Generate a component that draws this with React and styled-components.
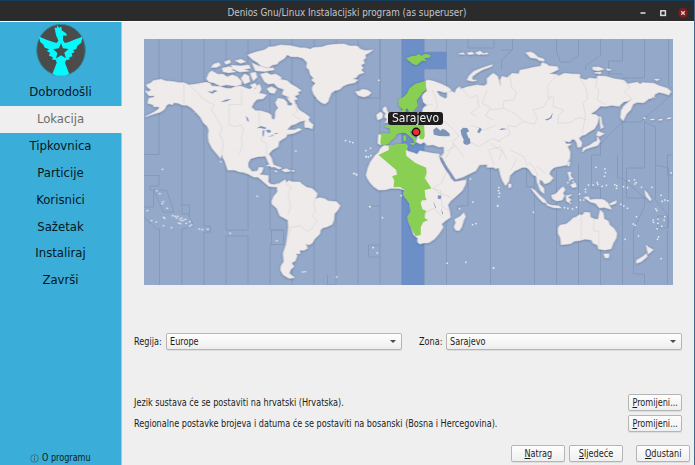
import React from "react";
import styled, { createGlobalStyle } from "styled-components";

const Global = createGlobalStyle`
  * { box-sizing: border-box; }
  body { margin: 0; background: #efefef; font-family: "DejaVu Sans Condensed", "DejaVu Sans", sans-serif; font-stretch: condensed; color: #1c1c1c; }
`;

const Window = styled.div`
  width: 695px; height: 465px; display: flex; flex-direction: column; overflow: hidden;
  background: #efefef; border-right: 1px solid #46688e;
`;
const TitleBar = styled.header`
  flex: 0 0 21px; display: grid; grid-template-columns: 1fr auto 1fr; align-items: center;
  background: #2b2b2b; border-top: 1px solid #123c5c; color: #c3c6cd; font-size: 10px; line-height: 14px;
  padding-top: 3px;
`;
const Title = styled.span`
  grid-column: 2; white-space: nowrap; transform: scaleX(0.98);
`;
const WindowButtons = styled.div`
  justify-self: end; display: flex; align-items: center; gap: 10px; padding-right: 6px;
  svg { display: block; }
`;
const Body = styled.div`
  flex: 1; display: flex; min-height: 0; border-top: 1px solid #fbfbfb;
`;
const Sidebar = styled.aside`
  flex: 0 0 122px; display: flex; flex-direction: column; align-items: center;
  background: #3aaed8; border-right: 1px solid #8fd0e6;
`;
const Logo = styled.svg`
  display: block; width: 52px; height: 54px; margin-top: 1px; flex: none;
`;
const Steps = styled.nav`
  width: 100%; display: flex; flex-direction: column; padding-top: 2px;
`;
const Step = styled.div`
  height: 26.85px; display: flex; align-items: center; justify-content: center;
  margin-right: ${p => (p.$current ? "-1px" : "0")};
  padding-right: ${p => (p.$current ? "1px" : "0")};
  font-size: 13px; line-height: 16px;
  background: ${p => (p.$current ? "#efefef" : "transparent")};
  color: ${p => (p.$current ? "#6d6d6d" : "#06161c")};
`;
const About = styled.div`
  margin-top: auto; height: 14px; display: flex; align-items: center; gap: 3px;
  font-size: 10px; line-height: 14px; color: #0b1b22;
  svg { display: block; }
  span { display: block; width: 49px; white-space: nowrap; transform: scaleX(0.9); transform-origin: left; }
`;
const Content = styled.main`
  flex: 1; display: flex; flex-direction: column; padding: 17px 12px 0 12px; min-width: 0;
`;
const MapBox = styled.div`
  width: 529px; height: 246px; margin-left: 9.5px; flex: none;
  display: grid; position: relative;
`;
const MapSvg = styled.svg`
  display: block; width: 529px; height: 246px;
`;
const MapLabel = styled.div`
  position: absolute; left: 244.5px; top: 73px; width: 55px; height: 13px;
  display: flex; justify-content: center; align-items: center;
  background: #1d1d1d; border-radius: 3px; color: #f2f2f2; font-size: 12px; line-height: 12px; padding-bottom: 2px;
`;
const Selectors = styled.div`
  margin-top: 48px; display: flex; align-items: center; flex: none;
`;
const Text = styled.span`
  font-size: 10px; line-height: 16px; white-space: nowrap; transform: scaleX(0.903); transform-origin: left;
`;
const FieldLabel = styled(Text)`
  width: ${p => p.$w}px; margin-left: ${p => p.$gap || 0}px;
`;
const Select = styled.div`
  width: 236px; height: 17px; display: flex; align-items: center; justify-content: space-between;
  padding: 0 5px 0 2.5px; border: 1px solid #b5b5b5; border-radius: 2px;
  background: linear-gradient(#fefefe, #eeeeee); box-shadow: 0 1px 0 #dedede;
`;
const Arrow = styled.i`
  border: 3px solid transparent; border-top: 3px solid #4b4b4b; border-bottom: 0;
`;
const Settings = styled.div`
  margin-top: 44px; display: flex; flex-direction: column; gap: 4px; flex: none;
`;
const SettingRow = styled.div`
  display: flex; align-items: center; justify-content: space-between; height: 17px;
  > ${Text} { padding-top: 1px; }
`;
const Button = styled.button`
  width: ${p => p.$w || 54}px; height: 17px; padding: 0; display: flex; align-items: center; justify-content: center;
  border: 1px solid #b5b5b5; border-radius: 2px; background: linear-gradient(#fefefe, #efefef);
  box-shadow: 0 1px 0 #dedede; color: inherit; font: inherit;
  ${Text} { transform-origin: center; padding-top: 1px; }
  u { text-underline-offset: 1px; text-decoration-thickness: 1px; }
`;
const Footer = styled.footer`
  display: flex; justify-content: flex-end; gap: 4px; margin: 12.5px -8px 0 0;
  ${Button}:last-child { margin-left: 9px; }
`;

const steps = ["Dobrodošli", "Lokacija", "Tipkovnica", "Particije", "Korisnici", "Sažetak", "Instaliraj", "Završi"];

/* Map sections, each drawn on its own grid of three units to a pixel. */
const sections = {
  northAmerica: "translate(140 30) scale(.33333)",
  southAmerica: "translate(140 155) scale(.33333)",
  europe: "translate(310 30) scale(.33333)",
  africa: "translate(350 140) scale(.33333)",
  asia: "translate(490 30) scale(.33333)",
  oceania: "translate(490 150) scale(.33333)",
};

const land = {
  northAmerica: [
    "M15 183L24 185 32 180 20 170 18 164 30 160 38 152 62 148 75 153 100 155 115 158 130 158 145 165 165 163 180 160 198 157 210 161 212 168 240 170 255 175 270 176 285 170 300 168 315 174 328 178 338 172 345 178 352 165 358 164 362 178 356 190 368 192 378 195 368 206 350 208 340 218 333 232 345 242 362 243 385 250 392 255 394 266 400 270 404 262 405 245 412 235 405 218 412 205 430 208 438 215 441 226 450 228 458 221 467 224 472 235 480 243 492 250 508 262 503 269 490 272 480 274 465 282 452 286 445 293 440 300 462 300 475 295 483 299 462 309 448 312 440 313 436 322 425 328 415 335 413 350 395 360 385 372 393 385 400 410 393 412 384 398 375 378 350 380 330 386 322 400 322 420 262 420 245 370 240 385 215 355 205 335 203 318 205 300 200 288 190 280 180 262 160 240 150 232 140 226 125 225 112 219 100 218 96 224 85 221 78 226 72 238 60 246 40 252 15 260 40 247 55 237 56 230 40 230 38 224 22 220 25 205 42 202 40 197 25 197Z",
    "M322 75L335 70 350 65 372 60 385 51 400 50 420 45 450 47 485 55 475 60 460 68 440 74 432 85 415 95 410 102 395 105 385 113 362 108 350 97 335 88Z",
    "M360 133L378 128 392 135 405 132 422 142 418 148 440 152 452 163 468 172 482 182 472 186 475 193 462 198 471 208 458 210 443 200 425 193 430 178 412 172 400 160 383 162 372 155Z",
    "M198 146L206 128 214 123 232 133 248 133 260 141 275 135 290 140 302 153 303 163 286 168 258 164 240 168 220 158 205 155Z",
    "M212 112L220 102 235 98 240 106 228 112ZM245 115L265 110 282 114 272 120 285 125 265 128 248 125ZM252 95L268 90 270 98 256 103ZM285 92L302 88 315 95 300 100ZM272 106L300 108 325 105 330 115 310 118 325 123 298 126 280 118ZM335 100L355 108 380 115 399 114 400 120 372 124 345 122ZM302 145L312 132 325 138 328 155 312 162ZM330 130L345 127 350 142 338 152 333 140ZM330 165L345 160 350 172 338 175ZM380 176L392 170 408 178 402 190 388 188ZM492 278L500 263 507 275 518 284 515 296 505 293 493 292ZM440 203L460 206 466 228 448 215Z",
  ],
  southAmerica: [
    "M240 -12L252 -8 260 8 272 30 278 42 295 50 310 52 325 58 340 66 352 66 362 74 376 86 385 94 395 95 410 96 413 85 403 89 390 88 383 80 384 62 368 60 356 59 364 52 368 38 356 37 351 48 335 50 323 36 321 15 328 0 345 -12ZM245 -8L253 1 268 25 262 28 252 14 247 8Z",
    "M378 32L392 27 408 33 423 39 415 42 398 34ZM424 45L438 41 450 48 434 51ZM454 46L462 47 457 50ZM403 47L411 49 405 51Z",
    "M410 92L418 84 434 74 438 83 444 77 458 81 478 81 485 88 498 97 516 101 530 115 528 125 522 132 538 128 552 131 563 138 588 140 599 152 593 164 582 176 580 195 575 208 560 215 548 218 540 225 538 237 522 252 515 265 504 270 495 265 501 280 491 286 478 285 478 296 465 296 470 302 464 318 453 323 460 335 450 344 446 355 462 368 445 370 428 359 420 345 422 332 430 320 428 295 437 268 440 248 444 215 442 195 418 182 409 160 394 147 394 137 400 124 411 111Z",
  ],
  europe: [
    "M-80 68L-55 62 -42 58 -20 53 0 58 8 53 35 51 50 46 75 43 100 42 118 48 140 48 150 58 165 62 187 60 176 68 164 74 166 84 158 90 162 100 151 105 158 114 152 120 160 128 145 133 138 142 126 147 142 150 132 158 112 162 98 168 88 178 72 182 62 190 56 205 52 216 42 222 30 216 20 207 10 193 5 180 6 170 15 160 3 150 10 145 0 135 -4 120 -12 112 -10 98 -22 85 -38 80 -58 80Z",
    "M135 185L148 183 155 178 172 181 182 188 175 196 160 201 143 196Z",
    "M341 156L352 150 370 154 392 162 415 173 422 180 415 187 400 187 385 182 378 184 388 198 405 207 410 200 410 188 425 184 432 190 438 177 447 170 450 178 470 171 500 165 520 168 530 162 545 150 537 138 549 130 562 140 566 155 570 170 580 400 420 410 407 405 400 350 385 351 368 344 350 346 341 336 330 342 316 335 322 320 312 308 305 300 300 290 320 270 320 256 335 248 338 234 350 226 371 222 350 225 338 216 335 200 338 193 350 183Z",
    "M218 234L226 230 230 243 236 252 245 268 240 275 224 278 230 268 222 260 226 250 218 244ZM198 255L210 246 217 252 215 264 202 270ZM204 314L216 314 211 345 202 340ZM470 150L476 137 490 124 515 114 545 104 544 109 516 119 498 130 485 140 485 149 498 151 486 154Z",
    "M445 72L458 68 462 73ZM470 69L485 66 490 72 475 74ZM495 69L508 63 518 70 505 74ZM515 73L530 68 532 72Z",
  ],
  africa: [
    "M75 45L84 38 90 25 100 17 118 18 165 12 170 18 166 28 172 34 188 38 200 43 208 32 225 36 245 40 265 42 272 52 268 58 277 75 285 90 295 103 300 115 312 126 330 123 347 120 345 133 335 152 315 170 300 183 292 195 296 208 300 232 285 242 273 252 278 262 265 282 252 297 235 308 218 309 208 312 201 306 202 295 190 285 183 263 175 245 173 230 182 215 178 190 160 165 163 150 145 145 120 145 105 149 85 150 70 140 60 130 50 114 47 105 52 85 60 66Z",
    "M340 218L345 230 340 240 333 262 326 272 315 270 311 260 316 248 313 238 328 230Z",
    "M245 -14L560 -20 570 100 560 100 549 106 540 94 532 80 522 76 510 85 492 93 478 107 475 124 465 137 455 120 450 105 445 83 434 86 426 73 415 68 390 66 370 64 360 62 350 50 336 42 350 61 358 66 365 58 378 64 386 76 376 92 360 100 335 112 315 118 308 106 293 84 278 57 273 48 281 38 284 17 272 12 258 13 243 7 238 0ZM474 132L481 132 482 141 475 144Z",
  ],
  asia: [
    "M-10 145L5 134 16 137 22 150 25 163 20 175 28 176 31 163 29 150 35 139 50 143 65 130 85 132 88 121 112 116 130 112 150 109 155 98 168 102 175 108 200 110 204 118 190 125 175 131 200 134 205 138 222 130 240 132 268 133 268 145 286 150 297 144 318 147 322 138 345 139 370 146 400 151 412 162 440 157 450 163 455 158 490 160 505 167 530 175 541 184 535 195 520 190 505 187 493 193 490 203 475 206 460 218 440 217 428 222 420 240 408 252 398 272 390 263 392 242 400 228 425 207 412 213 400 215 385 229 365 226 345 229 330 228 318 240 300 252 318 255 325 262 321 280 312 296 295 306 284 314 275 316 265 325 274 338 272 350 262 352 259 338 252 328 245 328 237 336 222 332 227 342 242 342 231 350 239 366 238 385 228 405 190 412 -10 412Z",
    "M106 68L120 66 130 70 143 82 160 87 160 94 145 91 138 85 120 83ZM306 112L325 111 340 118 322 122 308 119ZM348 116L362 119 352 122ZM312 128L332 126 330 132ZM492 148L506 148 500 152Z",
    "M328 258L332 262 334 280 339 292 331 296 329 280ZM322 304L341 311 328 319 318 316ZM321 320L329 334 322 346 302 352 286 357 276 366 278 355 298 346 310 337 320 333Z",
    "M458 263L465 266M480 269L491 268M505 270L515 268M530 266L541 264",
  ],
  oceania: [
    "M190 53L180 62 176 72 188 84 178 96 163 102 155 92 147 88 147 102 160 115 161 131 150 122 140 97 138 80 127 72 118 60 100 46 80 20 230 15 222 32Z",
    "M122 115L132 120 148 137 163 149 169 160 157 157 144 143 131 128ZM168 160L182 166 205 168 212 174 190 173 170 166ZM183 136L196 132 208 118 218 110 224 119 217 130 222 137 215 150 198 153 186 146ZM227 137L244 134 232 142 242 150 236 153 241 161 228 153ZM280 142L294 140 298 150 312 148 335 148 350 155 363 178 340 172 327 174 315 160 300 156ZM232 67L241 66 240 78 248 87 238 88ZM240 105L255 98 258 110 247 113ZM231 40L238 35 236 48 231 47Z",
    "M203 234L208 226 228 222 240 212 248 204 258 201 266 194 276 196 282 187 298 188 300 202 313 208 323 208 329 180 338 188 341 207 353 213 358 226 370 235 379 250 377 265 368 280 362 296 343 300 325 297 320 284 308 280 303 270 285 267 265 272 252 273 240 281 212 284 210 265 203 250Z",
    "M340 312L356 312 354 324 344 323ZM467 285L473 291 478 294 488 299 479 308 473 312 470 300ZM468 311L470 320 452 335 438 340 438 331 455 321Z",
    "M463 122L470 128 482 148 479 153 466 138ZM357 162L370 155 378 152 376 160 362 165Z",
  ],
};

const green = {
  europe: "M264 210L280 201 290 191 298 175 315 162 338 155 345 153 346 178 335 188 326 201 318 211 322 228 312 240 308 252 299 253 292 235 278 238 266 229ZM275 240L285 236 285 250 338 250 340 284 342 318 338 328 328 327 326 312 308 305 298 301 300 312 318 328 313 342 309 328 295 316 284 308 268 308 258 313 255 320 241 332 233 342 218 344 210 339 213 315 205 311 218 309 240 311 238 295 224 291 222 286 240 286 255 270ZM288 85L304 79 318 77 325 72 332 78 345 72 360 76 358 82 340 85 348 94 335 91 328 97 318 105 306 101 300 95 295 92ZM279 318L286 316 286 332 280 334ZM298 340L312 339 308 346Z",
  africa: "M85 45L116 30 115 18 140 13 167 13 171 27 165 31 167 48 195 70 226 83 228 98 222 115 242 145 222 150 224 172 228 180 213 181 210 190 215 208 227 213 222 222 222 235 232 240 218 246 210 260 210 285 195 287 185 267 173 240 174 228 182 215 178 190 160 168 164 150 148 140 130 142 132 122 126 108 140 105 138 90Z",
};

const lakes = {
  northAmerica: "M200 184L215 185 220 180 232 183 222 187 216 191ZM240 217L255 209 272 207 260 214ZM316 257L322 264 326 275 320 272ZM348 295L362 288 378 293 375 297 360 294ZM366 320L366 302 371 300 370 316ZM376 300L388 299 392 306 383 309ZM382 321L398 314 397 318ZM396 313L412 308 410 312Z",
  europe: "M370 314L368 300 378 292 390 302 396 296 405 300 418 311 417 319 400 319 386 318ZM450 301L458 293 470 294 476 304 468 308 474 323 474 337 463 342 460 330 453 315ZM500 306L508 292 514 299 506 310ZM322 210L330 202 337 212 336 235 322 250 306 250 312 238 321 229Z",
  africa: "M262 166L273 167 270 178 262 176ZM248 183L257 203 254 203ZM272 205L278 222 275 223ZM265 45L273 55 293 88 308 110 315 118 310 120 289 94 272 66ZM338 3L345 -5 358 -5 360 10 350 15 340 12Z",
  asia: "M162 270L178 263 187 248 183 264 172 271ZM26 300L34 295 50 297 36 299Z",
};

const borders = {
  northAmerica: "M130 158V224M148 168L165 182 190 208 222 226 212 238 232 270 245 292 238 312 250 340 244 370M303 178V223H266V285L285 290 300 284 310 300 302 325 306 345 295 375M356 245V290L374 300 362 330 378 340 378 375M466 222L470 244 456 256 480 268",
  southAmerica: "M435 85L453 98 443 115 450 155 442 180M442 250L450 218 480 212 500 230 515 220 530 198 515 182 524 170 520 145 525 128",
  europe: "M365 180L378 210 380 232 370 245 380 268 405 276 430 300M450 172L480 205 500 195 505 230 480 250 500 260M530 180L515 220 540 232 525 258 548 270M430 300L445 318 425 335 435 350 410 362M475 335L505 350 545 325 570 335M480 285L520 300 560 285",
  africa: "M258 45L270 60M288 95L275 125 250 145 258 155 300 172M225 82L228 120M245 145L270 152 275 200 298 212M215 250L228 215 250 205 275 230M310 10L285 55M310 10L340 50M430 75L415 30 450 20 470 60M480 30L520 50 530 75",
  asia: "M58 140L65 175 78 185 70 210 40 212 38 235 0 240M40 235L80 255 98 275 75 290 50 287 60 312 20 335M98 275L132 283 140 265 128 240 158 232 178 198 190 205 188 230 220 240 205 255 202 280 240 278 265 262 290 270M203 134L172 165V200L180 208M268 145L285 170 292 205 278 220 285 255 275 310M322 140L315 170 325 180 320 210 345 224M402 152L418 172 400 185 425 208M0 340L35 365 25 390",
  oceania: "M272 200V268M310 205V243H325V298M110 45L118 38 135 60 142 80M140 50L165 70M80 25L60 60",
};

const islands = {
  northAmerica: [[466, 363]],
  southAmerica: [[66, 43], [49, 107], [58, 116], [68, 140], [65, 146], [80, 160], [21, 167], [33, 197], [47, 201], [70, 187], [72, 190], [69, 212], [93, 218], [97, 182], [104, 184], [108, 189], [112, 184], [118, 192], [124, 189], [122, 197], [129, 196], [135, 193], [114, 204], [120, 206], [137, 205], [148, 200], [153, 210], [148, 214], [176, 222], [185, 224], [202, 223], [269, 235], [409, 257], [350, 124], [241, 20], [640, 56], [648, 58], [487, 351], [494, 350], [589, 366], [687, 155]],
  europe: [[105, 332], [118, 335], [127, 338], [168, 380], [166, 362], [180, 355], [205, 151]],
  africa: [[46, 50], [54, 51], [61, 47], [12, 100], [18, 105], [59, 200], [96, 233], [68, 323], [80, 339], [152, 167], [327, 206], [367, 186], [366, 254], [376, 251], [290, 370], [346, 367], [429, 384], [360, 117], [445, 143], [444, 152], [447, 160], [445, 170], [441, 198]],
  oceania: [[317, 52], [343, 57], [345, 68], [342, 79], [285, 118], [285, 126], [294, 105], [308, 105], [320, 98], [322, 103], [335, 109], [348, 106], [373, 104], [379, 107], [378, 115], [399, 110], [416, 92], [432, 90], [437, 98], [433, 102], [411, 113], [453, 112], [484, 112], [542, 69], [512, 136], [515, 154], [523, 150], [532, 152], [496, 177], [499, 182], [488, 210], [489, 217], [502, 208], [502, 220], [523, 200], [521, 211], [514, 229], [500, 236], [504, 261], [501, 268], [512, 326], [444, 258], [404, 268], [129, 187], [9, 354], [22, 167], [391, 163], [400, 168], [411, 175], [428, 222], [434, 226], [438, 200], [267, 132], [270, 150], [222, 173], [232, 175], [246, 177], [258, 172], [237, 90], [232, 98], [248, 95], [280, 150]],
};

const zoneLines = [
  "M158.5 39V154.5H143.5M143.5 175.5H158.5V186H149.5V190H166L173 210V212H163L153 190M143.5 207H153V190M143.5 217L156 229H159V285",
  "M181.3 39V205H189V214H181.5V205M181.3 285V229L193 226 188 214M203.4 39V226H210V232H203.4V285M225.5 39V230H247.5V39M225.5 285V236H247.5V285",
  "M269.5 39V230H283M269.5 285V244.5H283V230H271V244.5M291.5 39V285M313.5 39V285M335.5 39V285H327V275M357.5 39V98H379.5V39M357.5 285V99",
  "M379.5 39V285M379.5 206H368V209M379.5 245H368V257H379.5M446 39V52M446 69V285M467.5 39V48H493.5V39M467.5 140V206H457V210M490 150V285M512 39V50L501 60V70M501 50H512M534 150V285M556 39V52L560 62H570L578 55V39",
  "M600 39V55L585 66V70M600 140V155H591V188H600V285M534 160H526V187H534M622 39V61H608V74H622M644 39V78H622M668 39V85L671 88M622 285V178H617V155M578 163V285M556 170V285M673 93L640 122 622 122 600 144",
  "M622 122V178L644 198V206L633 230V250V274H644V285M644 122V168H626V198H644M644 122L655 127V200L667 215V228M655 165 668 168V228H657V216H666M667 285V230M673 155H667V175H673",
];

function Group({ name, children }) {
  return <g transform={sections[name]}>{children}</g>;
}

function WorldMap() {
  return (
    <MapSvg viewBox="143.5 39 529 246" preserveAspectRatio="none">
      <defs>
        <filter id="coast" x="-5%" y="-5%" width="110%" height="110%">
          <feTurbulence type="fractalNoise" baseFrequency="0.35" numOctaves="2" seed="4" result="n" />
          <feDisplacementMap in="SourceGraphic" in2="n" scale="1.5" xChannelSelector="R" yChannelSelector="G" result="d" />
          <feDropShadow in="d" dx="0" dy="0.4" stdDeviation="0.8" floodColor="#43587e" floodOpacity="0.75" />
        </filter>
      </defs>
      <rect x="143" y="39" width="531" height="246" fill="#94a9ca" />
      <path d="M401.3 39H423.7V52H446V69H423.7V285H401.3Z" fill="#6c8fc8" stroke="#7189b5" strokeWidth=".5" />
      <g fill="none" stroke="#8195b8" strokeWidth=".8">{zoneLines.map((d, i) => <path key={i} d={d} />)}</g>
      <g filter="url(#coast)">
        {Object.entries(land).map(([name, paths]) => (
          <Group key={name} name={name}>
            {paths.map((d, i) => <path key={i} d={d} fill="#efebeb" stroke="#efebeb" strokeWidth={name === "asia" && i === 3 ? 4 : 1.6} />)}
          </Group>
        ))}
        {Object.entries(green).map(([name, d]) => <Group key={name} name={name}><path d={d} fill="#89cf53" /></Group>)}
      </g>
      {Object.entries(borders).map(([name, d]) => <Group key={name} name={name}><path d={d} fill="none" stroke="#dad7d8" strokeWidth="2.2" strokeLinejoin="round" /></Group>)}
      {Object.entries(green).map(([name, d]) => <Group key={name} name={name}><path d={d} fill="#89cf53" /></Group>)}
      {Object.entries(lakes).map(([name, d]) => <Group key={name} name={name}><path d={d} fill="#7c93ba" /></Group>)}
      {Object.entries(islands).map(([name, points]) => (
        <Group key={name} name={name}>{points.map(([x, y]) => <rect key={`${x}-${y}`} x={x - 2.2} y={y - 2.2} width="4.4" height="4.4" fill="#eeeef0" />)}</Group>
      ))}
      <circle cx="415.6" cy="132" r="3.7" fill="#f7282e" stroke="#161616" strokeWidth="1.4" />
    </MapSvg>
  );
}

function PhoenixLogo() {
  return (
    <Logo viewBox="104 69 156 164">
      <ellipse cx="182" cy="151" rx="74" ry="78" fill="#4b4b4b" stroke="#298fa3" strokeWidth="3" />
      <path d="M162 82L168 85 172 76 176 84 183 80 184 91 198 101 200 108 188 107 188 122 194 130 206 127 226 118 247 111 244 128 232 138 228 149 218 151 224 157 214 162 217 170 207 173 208 180 198 181 194 190 207 223 195 229H169L156 223 169 190 166 181 155 180 157 173 145 168 149 160 139 154 146 149 133 144 128 134 119 127 115 110 136 119 158 127 169 130 174 122 167 106Z" fill="#05f8fc" />
      <path d="M182 130L188 146 205 148 192 159 197 176 182 167 167 177 171 160 158 149 176 146Z" fill="#4b4b4b" />
      <path d="M174 180L182 175 190 180" fill="none" stroke="#05f8fc" strokeWidth="4" />
    </Logo>
  );
}

function Action({ label, ...rest }) {
  return <Button {...rest}><Text><u>{label[0]}</u>{label.slice(1)}</Text></Button>;
}

export default function App() {
  return (
    <>
      <Global />
      <Window>
        <TitleBar>
          <Title>Denios Gnu/Linux Instalacijski program (as superuser)</Title>
          <WindowButtons>
            <svg width="10" height="10"><path d="M2.5 5h5" stroke="#d8d8de" strokeWidth="1.6" /></svg>
            <svg width="10" height="10"><rect x="2.8" y="2.8" width="4.6" height="4.6" fill="none" stroke="#dcdce4" strokeWidth="1.5" /></svg>
            <svg width="10" height="10"><circle cx="5" cy="5" r="4.9" fill="#7c1c20" /><path d="M3.2 3.2l3.6 3.6M6.8 3.2L3.2 6.8" stroke="#e6cdd0" strokeWidth="1.3" /></svg>
          </WindowButtons>
        </TitleBar>
        <Body>
          <Sidebar>
            <PhoenixLogo />
            <Steps>{steps.map(s => <Step key={s} $current={s === "Lokacija"}>{s}</Step>)}</Steps>
            <About>
              <svg width="9" height="9"><circle cx="4.5" cy="4.5" r="3.8" fill="none" stroke="#36687b" strokeWidth=".8" /><path d="M4.5 2v1M4.5 3.8v3" stroke="#36687b" strokeWidth="1" /></svg>
              <span>O programu</span>
            </About>
          </Sidebar>
          <Content>
            <MapBox>
              <WorldMap />
              <MapLabel>Sarajevo</MapLabel>
            </MapBox>
            <Selectors>
              <FieldLabel $w={32}>Regija:</FieldLabel>
              <Select><Text>Europe</Text><Arrow /></Select>
              <FieldLabel $w={27} $gap={17}>Zona:</FieldLabel>
              <Select><Text>Sarajevo</Text><Arrow /></Select>
            </Selectors>
            <Settings>
              <SettingRow><Text>Jezik sustava će se postaviti na hrvatski (Hrvatska).</Text><Action label="Promijeni..." /></SettingRow>
              <SettingRow><Text>Regionalne postavke brojeva i datuma će se postaviti na bosanski (Bosna i Hercegovina).</Text><Action label="Promijeni..." /></SettingRow>
            </Settings>
            <Footer><Action label="Natrag" /><Action label="Sljedeće" /><Action label="Odustani" /></Footer>
          </Content>
        </Body>
      </Window>
    </>
  );
}
